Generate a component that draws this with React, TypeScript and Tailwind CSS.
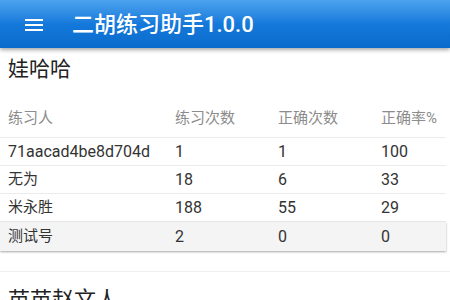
import React from "react";

const rows = [
  ["71aacad4be8d704d", "1", "1", "100"],
  ["无为", "18", "6", "33"],
  ["米永胜", "188", "55", "29"],
  ["测试号", "2", "0", "0"],
];

function Cell({ c }: { c: string }) {
  const latin = /^[0-9a-z%]+$/i.test(c);
  return <div className={latin ? "text-[16px]" : "text-[15px]"}>{c}</div>;
}

export default function App() {
  const font = { fontFamily: 'Roboto, "Noto Sans CJK SC", sans-serif' };
  return (
    <div className="w-[450px] h-[300px] overflow-hidden bg-white" style={font}>
      <div className="relative z-10 h-[48px] flex items-center bg-gradient-to-b from-[#4ba3ee] via-[#1479db] to-[#0a6bcb] shadow-[0_2px_4px_rgba(0,0,0,0.35)]">
        <div className="ml-[25px] w-[18px] flex flex-col gap-[3px] mt-[2px]">
          <div className="h-[2px] bg-white" />
          <div className="h-[2px] bg-white" />
          <div className="h-[2px] bg-white" />
        </div>
        <div className="ml-[29px] text-white text-[22px] font-medium">二胡练习助手1.0.0</div>
      </div>
      <div className="px-2 pt-[7px] h-[52px] text-[21px] leading-[28px] text-[#222]">娃哈哈</div>
      <div className="w-[446px]">
        <div className="grid grid-cols-[167px_103px_103px_1fr] pl-2 h-[38px] items-center text-[15px] text-[#8c8c8c] border-b border-[#ebebeb]">
          <div>练习人</div>
          <div>练习次数</div>
          <div>正确次数</div>
          <div>正确率%</div>
        </div>
        {rows.map((r, i) => {
          const last = i === rows.length - 1;
          return (
            <div
              key={i}
              className={
                last
                  ? "grid grid-cols-[167px_103px_103px_1fr] pl-2 h-[29px] items-center text-[#333] bg-[#f4f4f4] shadow-[0_1px_2px_rgba(0,0,0,0.35)]"
                  : "grid grid-cols-[167px_103px_103px_1fr] pl-2 h-[28px] items-center text-[#333] border-b border-[#ebebeb]"
              }
            >
              {r.map((c, j) => (
                <Cell key={j} c={c} />
              ))}
            </div>
          );
        })}
      </div>
      <div className="mt-[20px] border-t border-[#f0f0f0] px-2 pt-[14px] text-[22px] leading-[28px] text-[#222]">苗苗赵文人</div>
    </div>
  );
}
